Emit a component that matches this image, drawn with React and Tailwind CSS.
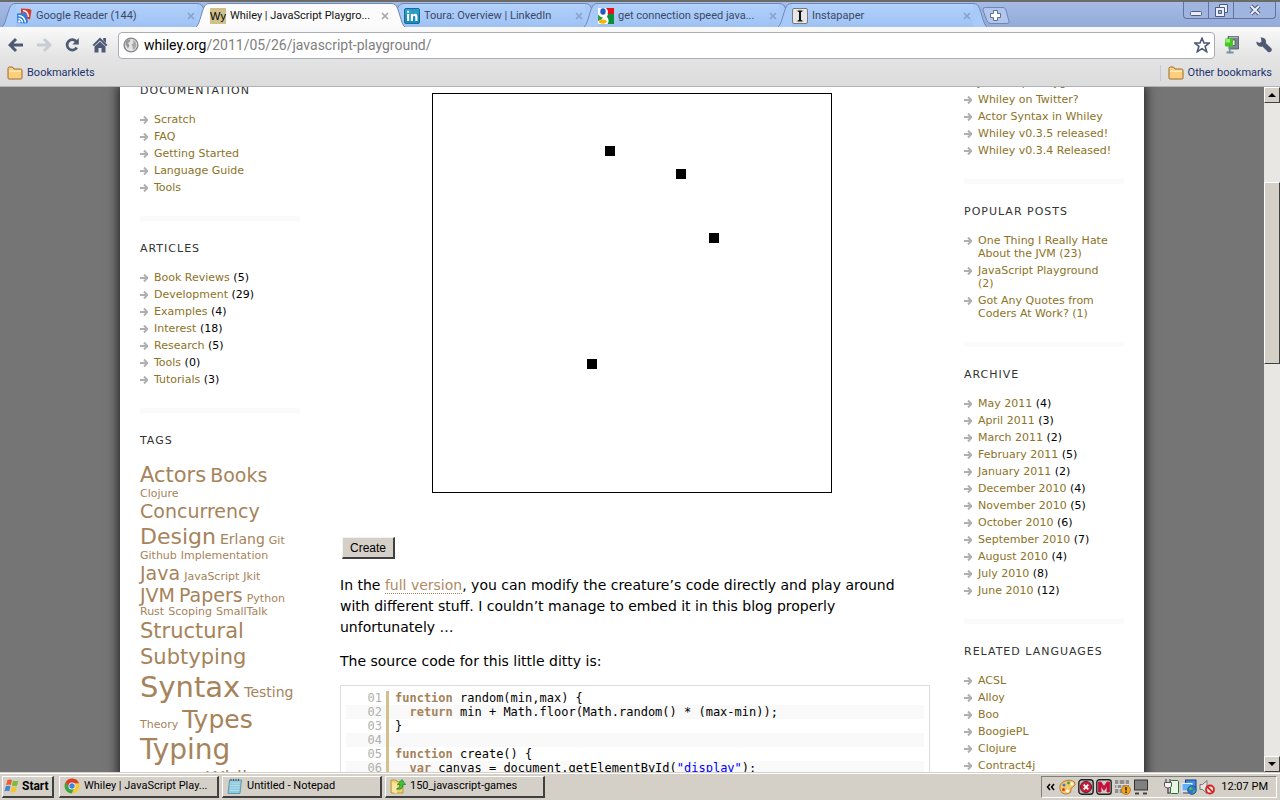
import React from "react";

const UI = "font-['Roboto','Liberation_Sans',sans-serif]";
const BODY = "font-['DejaVu_Sans',sans-serif]";

/* ---------- icons ---------- */

const Svg = ({ w = 16, h = 16, children, className = "" }) => (
  <svg width={w} height={h} viewBox={`0 0 ${w} ${h}`} className={`shrink-0 ${className}`} aria-hidden="true">
    {children}
  </svg>
);

const ReaderIcon = () => (
  <Svg>
    <path d="M5 0.5 14 1 15.5 2.5 14 11.5 5 9Z" fill="#d93a2b" />
    <path d="M7 2.500Q12 3 12.500 9M7 5.500Q9.500 6 10 9" stroke="#fff" strokeWidth="1.300" fill="none" />
    <path d="M1 5.500 10 5 12 14 10.500 15.500 1.500 15Z" fill="#2a7de0" />
    <path d="M2.500 7.500Q8.500 8 9.500 14.500M2.500 10.500Q6 11 6.500 14.500" stroke="#fff" strokeWidth="1.500" fill="none" />
    <circle cx="3.300" cy="13.500" r="1.200" fill="#fff" />
  </Svg>
);

const WhileyIcon = () => (
  <span className="flex size-4 shrink-0 items-center justify-center bg-[#cfc08c] font-['Liberation_Sans',sans-serif] text-[11px] leading-4 text-black">
    Wy
  </span>
);

const LinkedInIcon = () => (
  <Svg>
    <rect x="0.500" y="0.500" width="15" height="15" rx="1.500" fill="#1b8dbb" stroke="#0f6f99" />
    <rect x="1" y="1" width="14" height="6" fill="#3ba5cf" opacity=".6" />
    <path d="M3 6h2.200v7H3zM3 2.800h2.200v2H3zM6.800 6H9v1Q9.800 5.800 11.200 5.800 13.500 5.800 13.500 8.800V13h-2.200V9.300Q11.300 7.800 10.200 7.800 9 7.800 9 9.300V13H6.800Z" fill="#fff" />
  </Svg>
);

const GoogleIcon = () => (
  <Svg>
    <rect width="16" height="16" fill="#fff" />
    <path d="M8 0h8v6H9.500Q11 3 8 0Z" fill="#e8121a" />
    <path d="M10 6h6v10H9.500Q12 12.500 9 9Z" fill="#0a8f3c" />
    <path d="M0 6.500Q2 9 5 9.500L3.500 11.500 0 13Z" fill="#2e9c45" />
    <ellipse cx="5" cy="3.500" rx="2.700" ry="3.300" fill="#2458c4" />
    <ellipse cx="4.800" cy="13.600" rx="3.800" ry="2.100" fill="#f5b400" />
  </Svg>
);

const InstapaperIcon = () => (
  <Svg>
    <rect x="0.500" y="0.500" width="15" height="15" rx="1.500" fill="#e6e6e6" stroke="#77797d" />
    <path d="M5.500 2.500h5v1L9 4v8l1.500.5v1h-5v-1L7 12V4L5.500 3.500Z" fill="#111" />
  </Svg>
);

const CloseX = ({ light }) => (
  <Svg w={8} h={8}>
    <path d="M1 1 7 7M7 1 1 7" stroke={light ? "#a3a3a3" : "#86a1c8"} strokeWidth="1.500" />
  </Svg>
);

const BackIcon = ({ color }) => (
  <Svg>
    <path d="M8 2 2 8l6 6M2.500 8H15" stroke={color} strokeWidth="3" fill="none" />
  </Svg>
);
const ForwardIcon = ({ color }) => (
  <Svg>
    <path d="M8 2 14 8 8 14M13.500 8H1" stroke={color} strokeWidth="3" fill="none" />
  </Svg>
);
const ReloadIcon = () => (
  <Svg>
    <path d="M12.400 4.700A5.200 5.200 0 1 0 12.800 10.500" stroke="#4e5a73" strokeWidth="2.700" fill="none" />
    <path d="M14.800 1v6.500H8.300Z" fill="#4e5a73" />
  </Svg>
);
const HomeIcon = () => (
  <Svg>
    <path d="M8 0.500 15.500 8 14 9.200 8 3.500 2 9.200.500 8ZM11.200 1H14v5l-2.800-2.800Z" fill="#4e5a73" />
    <path d="M8 4.500 13.500 9.500V15.500H9.500V11h-3v4.500H2.500V9.500Z" fill="#4e5a73" />
  </Svg>
);
const GlobeIcon = () => (
  <Svg>
    <circle cx="8" cy="8" r="6.900" fill="#e4e4e4" stroke="#858585" strokeWidth="1.400" />
    <path d="M3 4Q5 2 7.500 2.200L7 4.500 5 6 6.500 8.500 5 11.500 3.500 9 2.300 7Z" fill="#999" />
    <path d="M9.500 3 12.500 4.500 13.500 8 12 12 9.800 12.500 9.500 9.500 8.500 7.500 10.500 6Z" fill="#aaa" />
  </Svg>
);
const StarIcon = () => (
  <Svg>
    <path d="M8 1.300 10 6h5.200l-4.100 3.300 1.600 5.400L8 11.600l-4.700 3.100 1.600-5.400L.8 6H6Z" fill="#fff" stroke="#4e5a73" strokeWidth="1.600" />
  </Svg>
);
const ClampIcon = () => (
  <Svg h={20}>
    <path d="M4 1.500H14.500V14H5V10.500H11V5H4Z" fill="#7b868c" stroke="#4b555b" strokeWidth=".8" />
    <path d="M5 2.300H14" stroke="#b9c2c6" />
    <rect x="1" y="3.500" width="8" height="8" rx="1" fill="#3fca1c" />
    <path d="M1.500 4H6V7.500H1.500Z" fill="#95f26e" />
    <path d="M5.700 12V18.500M2.500 17.500H9.500" stroke="#7790a0" strokeWidth="1.800" />
  </Svg>
);
const WrenchIcon = () => (
  <Svg>
    <path d="M0.500 4.500 3.500 6 5.500 4.500 5 1.500 4.500.500Q8.500 0 9.800 3.300 10.200 4.800 9.800 6L15.500 11.500Q16.300 13.300 15 14.500 13.700 15.800 12 15L6.500 9.500Q3 10.500 1 7.500.200 6 .5 4.500Z" fill="#4e5a73" />
  </Svg>
);
const FolderIcon = () => (
  <Svg w={16} h={14}>
    <path d="M1 12V2.500Q1 1 2.500 1H5.500L7 3H13.500Q15 3 15 4.500V12Q15 13 14 13H2Q1 13 1 12Z" fill="#fbcf7c" stroke="#9b6b34" />
    <path d="M2 4.500H14V6H2Z" fill="#ffe8b5" />
  </Svg>
);

const ArrowBullet = () => (
  <Svg w={8} h={13}>
    <path d="M0 7H7M4 3.500 7.300 7 4 10.500" stroke="#b0b0b0" strokeWidth="1.900" fill="none" />
  </Svg>
);

/* ---------- browser chrome ---------- */

const tabs = [
  { title: "Google Reader (144)", icon: <ReaderIcon /> },
  { title: "Whiley | JavaScript Playgro...", icon: <WhileyIcon />, active: true },
  { title: "Toura: Overview | LinkedIn", icon: <LinkedInIcon /> },
  { title: "get connection speed java...", icon: <GoogleIcon /> },
  { title: "Instapaper", icon: <InstapaperIcon /> },
];

function Tab({ title, icon, active }) {
  const fill = active ? "#fbfbfb" : "#a8caf8";
  return (
    <div className={`flex h-[24px] w-[209px] shrink -mr-[15px] ${active ? "z-10" : ""}`}>
      <Svg w={14} h={24}>
        <path d="M0 24C4 22 6 4 10 1.500Q11 .5 14 .5V24Z" fill={fill} />
        <path d="M0 24C4 22 6 4 10 1.500Q11 .5 14 .5" fill="none" stroke="#6f87b3" />
      </Svg>
      <div
        className={`flex min-w-0 flex-1 items-center border-t border-[#6f87b3] ${
          active ? "bg-[#fbfbfb] text-[#111]" : "bg-linear-to-b from-[#b2d1fb] to-[#9fc2f4] text-[#3a4a66]"
        }`}
      >
        {icon}
        <a href="#tab" className="ml-1 min-w-0 flex-1 truncate text-[11px] leading-4">
          {title}
        </a>
        <button aria-label={`Close ${title}`} className="mr-[2px]">
          <CloseX light={active} />
        </button>
      </div>
      <Svg w={14} h={24}>
        <path d="M14 24C10 22 8 4 4 1.500Q3 .5 0 .5V24Z" fill={fill} />
        <path d="M14 24C10 22 8 4 4 1.500Q3 .5 0 .5" fill="none" stroke="#6f87b3" />
      </Svg>
    </div>
  );
}

function TabStrip() {
  return (
    <div className="flex h-[27px] items-end border-t-2 border-[#6b6b66] bg-linear-to-b from-[#a6bce6] to-[#93a9d8] pl-[2px] pr-1">
      <div className="flex min-w-0 items-end">
        {tabs.map((t) => (
          <Tab key={t.title} {...t} />
        ))}
      </div>
      <button aria-label="New tab" className="ml-[10px] mb-[3px]">
        <Svg w={28} h={17}>
          <path d="M3 .5H21Q23 .5 24 3L27 14.500Q27 16.500 25 16.500H9Q6 16.500 5 14L1 3Q.500 .5 3 .5Z" fill="#b0c6ec" stroke="#6f87b3" />
          <path d="M11.500 3.500h4v3h3v4h-3v3h-4v-3h-3v-4h3Z" fill="#fff" stroke="#5b7099" />
        </Svg>
      </button>
      <div className="ml-auto flex h-[17px] self-start overflow-hidden rounded-b-[4px] border border-t-0 border-[#5f759f] bg-[#9fb4df]">
        <button aria-label="Minimize" className="flex w-[25px] items-center justify-center border-r border-[#5f759f]">
          <Svg w={12} h={14}>
            <rect x=".5" y="8.500" width="11" height="4" rx="1" fill="#e8eefb" stroke="#4c5c80" />
          </Svg>
        </button>
        <button aria-label="Restore" className="flex w-[25px] items-center justify-center border-r border-[#5f759f]">
          <Svg w={13} h={14}>
            <path d="M4.500 1.500h8v8h-8Z" fill="#e8eefb" stroke="#4c5c80" />
            <path d="M.5 4.500h9v9h-9Z" fill="#e8eefb" stroke="#4c5c80" />
            <path d="M3.500 7.500h3v3h-3Z" fill="#9fb4df" stroke="#4c5c80" />
          </Svg>
        </button>
        <button aria-label="Close" className="flex w-[41px] items-center justify-center">
          <Svg w={12} h={12}>
            <path d="M2 2 10 10M10 2 2 10" stroke="#4c5c80" strokeWidth="4" />
            <path d="M2 2 10 10M10 2 2 10" stroke="#e8eefb" strokeWidth="2" />
          </Svg>
        </button>
      </div>
    </div>
  );
}

function Toolbar() {
  return (
    <div className="flex flex-col border-b border-[#b0b3ba] bg-linear-to-b from-[#fafafa] via-[#e4e4e4] to-[#dcdcdc]">
      <div className="flex h-8 items-center pl-2 pr-2 pt-1">
        <div className="flex gap-3">
          <button aria-label="Back"><BackIcon color="#4e5a73" /></button>
          <button aria-label="Forward"><ForwardIcon color="#c9ccd2" /></button>
          <button aria-label="Reload"><ReloadIcon /></button>
          <button aria-label="Home"><HomeIcon /></button>
        </div>
        <div className="ml-[10px] flex h-[27px] flex-1 items-center rounded-[4px] border border-[#a9adb5] bg-white pl-1 pr-1">
          <GlobeIcon />
          <label className="relative ml-[5px] flex h-5 flex-1 items-center text-[14px] leading-5">
            <span aria-hidden="true" className="pointer-events-none whitespace-pre text-[#808080]">
              <span className="text-black">whiley.org</span>/2011/05/26/javascript-playground/
            </span>
            <input
              aria-label="Address"
              defaultValue="whiley.org/2011/05/26/javascript-playground/"
              className="absolute inset-0 w-full bg-transparent text-transparent outline-none"
            />
          </label>
          <button aria-label="Bookmark this page"><StarIcon /></button>
        </div>
        <button aria-label="Extension" className="ml-[9px]"><ClampIcon /></button>
        <button aria-label="Settings" className="ml-4"><WrenchIcon /></button>
      </div>
      <div className="flex h-[27px] items-center pl-[7px] pr-2 text-[11px] leading-4 text-[#1c3370]">
        <a href="#bookmarklets" className="flex items-center gap-1"><FolderIcon />Bookmarklets</a>
        <a href="#other" className="ml-auto flex items-center gap-1 border-l border-[#c3cad6] pl-[7px]"><FolderIcon />Other bookmarks</a>
      </div>
    </div>
  );
}

/* ---------- sidebars ---------- */

function Heading({ children }) {
  return <h3 className="mb-4 text-[11px] leading-[13px] tracking-[1px] text-[#333]">{children}</h3>;
}

function Section({ title, items }) {
  return (
    <section>
      {title && <Heading>{title}</Heading>}
      <ul className="mb-[18px] pr-2">
        {items.map(([name, count]) => (
          <li key={name} className="flex gap-[6px] pb-1">
            <ArrowBullet />
            <span>
              <a href="#item" className="text-[#8c7326]">{name}</a>
              {count !== undefined && ` (${count})`}
            </span>
          </li>
        ))}
      </ul>
      <div className="mb-[21px] h-[5px] bg-[#fafafa]" />
    </section>
  );
}

const documentation = [["Scratch"], ["FAQ"], ["Getting Started"], ["Language Guide"], ["Tools"]];
const articles = [
  ["Book Reviews", 5], ["Development", 29], ["Examples", 4], ["Interest", 18],
  ["Research", 5], ["Tools", 0], ["Tutorials", 3],
];
const recent = [
  ["JavaScript Playground"], ["Whiley on Twitter?"], ["Actor Syntax in Whiley"],
  ["Whiley v0.3.5 released!"], ["Whiley v0.3.4 Released!"],
];
const popular = [
  ["One Thing I Really Hate About the JVM (23)"], ["JavaScript Playground (2)"],
  ["Got Any Quotes from Coders At Work? (1)"],
];
const archive = [
  ["May 2011", 4], ["April 2011", 3], ["March 2011", 2], ["February 2011", 5], ["January 2011", 2],
  ["December 2010", 4], ["November 2010", 5], ["October 2010", 6], ["September 2010", 7],
  ["August 2010", 4], ["July 2010", 8], ["June 2010", 12],
];
const languages = [["ACSL"], ["Alloy"], ["Boo"], ["BoogiePL"], ["Clojure"], ["Contract4j"]];

const S = "text-[11px]";
const M = "text-[14px]";
const L = "text-[19px]";
const XL = "text-[21px]";
const tagRows = [
  ["h-[24px] leading-[24px]", [["Actors", XL], ["Books", L]]],
  ["h-[13px] leading-[13px]", [["Clojure", S]]],
  ["h-[23px] leading-[23px]", [["Concurrency", L]]],
  ["h-[27px] leading-[27px]", [["Design", "text-[22px]"], ["Erlang", M], ["Git", S]]],
  ["h-[12px] leading-[12px]", [["Github", S], ["Implementation", S]]],
  ["h-[23px] leading-[23px]", [["Java", L], ["JavaScript", S], ["Jkit", S]]],
  ["h-[21px] leading-[21px]", [["JVM", L], ["Papers", L], ["Python", S]]],
  ["h-[12px] leading-[12px]", [["Rust", S], ["Scoping", S], ["SmallTalk", S]]],
  ["h-[27px] leading-[27px]", [["Structural", XL]]],
  ["h-[24px] leading-[24px]", [["Subtyping", XL]]],
  ["h-[36px] leading-[36px]", [["Syntax", "text-[29px]"], ["Testing", M]]],
  ["h-[29px] leading-[29px]", [["Theory", S], ["Types", "text-[25px]"]]],
  ["h-[32px] leading-[32px]", [["Typing", "text-[28px]"]]],
  ["h-[24px] leading-[24px]", [["Verification", S], ["Whiley", L]]],
];

function TagCloud() {
  return (
    <section>
      <Heading>TAGS</Heading>
      {tagRows.map(([row, tags]) => (
        <div key={tags[0][0]} className={`flex items-baseline gap-1 whitespace-nowrap text-[#a6835a] ${row}`}>
          {tags.map(([t, size]) => (
            <a key={t} href="#tag" className={size}>{t}</a>
          ))}
        </div>
      ))}
    </section>
  );
}

/* ---------- article ---------- */

const K = ({ children }) => <b className="text-[#a6835a]">{children}</b>;
const Str = ({ children }) => <span className="text-[#0000ff]">{children}</span>;
const code = [
  <><K>function</K>{" random(min,max) {"}</>,
  <>{"  "}<K>return</K>{" min + Math.floor(Math.random() * (max-min));"}</>,
  "}",
  " ",
  <><K>function</K>{" create() {"}</>,
  <>{"  "}<K>var</K>{" canvas = document.getElementById("}<Str>"display"</Str>{");"}</>,
];

function Article() {
  return (
    <main className="min-w-0 flex-1 pt-[6px] text-[14px] leading-[21px] text-black">
      <div className="flex justify-center pr-[6px]">
        <svg width="400" height="400" viewBox="0 0 400 400" role="img" aria-label="Creatures">
          <rect x=".5" y=".5" width="399" height="399" fill="#fff" stroke="#000" />
          <path d="M173 53h10v10h-10ZM244 76h10v10h-10ZM277 140h10v10h-10ZM155 266h10v10h-10Z" fill="#000" />
        </svg>
      </div>
      <button className="mb-4 ml-[2px] mt-11 block h-[22px] border border-b-2 border-r-2 border-b-[#404040] border-l-[#f4f2ee] border-r-[#404040] border-t-[#f4f2ee] bg-[#d4d0c8] px-[7px] font-['Liberation_Sans',sans-serif] text-[12px] leading-4">
        Create
      </button>
      <p className="mb-[13px] pr-6">
        In the <a href="#full" className="border-b border-dotted border-[#a6835a] text-[#b08a62]">full version</a>, you can modify the
        creature’s code directly and play around with different stuff. I couldn’t manage to embed it in this blog properly
        unfortunately …
      </p>
      <p className="mb-[13px]">The source code for this little ditty is:</p>
      <pre className="border border-[#ddd] p-[5px] font-['DejaVu_Sans_Mono',monospace] text-[12px] leading-[14px]">
        {code.map((line, i) => (
          <div key={i} className={`flex ${i % 2 ? "bg-[#f9f9f9]" : ""}`}>
            <span className="w-10 shrink-0 pr-1 text-right text-[#afafaf]">{`0${i + 1}`}</span>
            <code className="flex-1 border-l-[3px] border-[#d4c08c] pl-[6px] font-['DejaVu_Sans_Mono',monospace]">{line}</code>
          </div>
        ))}
      </pre>
    </main>
  );
}

function Scrollbar() {
  const raised = "border border-b-[#404040] border-l-white border-r-[#404040] border-t-white bg-[#d4d0c8]";
  return (
    <div className="flex w-4 shrink-0 flex-col bg-[#e9e7e3]">
      <button aria-label="Scroll up" className={`flex h-4 shrink-0 items-center justify-center ${raised}`}>
        <Svg w={8} h={4}><path d="M4 0 8 4H0Z" fill="#000" /></Svg>
      </button>
      <div className="flex-[79]" />
      <div className={`flex-[181] ${raised}`} />
      <div className="flex-[393]" />
      <button aria-label="Scroll down" className={`flex h-4 shrink-0 items-center justify-center ${raised}`}>
        <Svg w={8} h={4}><path d="M4 4 8 0H0Z" fill="#000" /></Svg>
      </button>
    </div>
  );
}

/* ---------- taskbar ---------- */

const WindowsLogo = () => (
  <Svg>
    <path d="M3.500 2Q6 .8 8 2L6.800 7Q4.500 6 2 7.200Z" fill="#ee5a2a" />
    <path d="M9 2.500Q11.500 3.600 14.500 2.500L13 7.700Q10.500 8.600 7.800 7.500Z" fill="#7dbb3a" />
    <path d="M1.800 8.300Q4.200 7.200 6.500 8.200L5.200 13.200Q3 12.200.4 13.400Z" fill="#3f86d8" />
    <path d="M7.600 8.700Q10 9.800 12.800 8.800L11.400 14Q9 15 6.300 13.800Z" fill="#f7c331" />
  </Svg>
);
const ChromeIcon = () => (
  <Svg>
    <circle cx="8" cy="8" r="7.500" fill="#f6c92e" />
    <path d="M1.500 4.300A7.500 7.500 0 0 1 15 5.300H8L4.800 10Z" fill="#db3d2e" />
    <path d="M1.500 4.300A7.500 7.500 0 0 0 7.500 15.500L10.800 9.500 5 9.500Z" fill="#3aa648" />
    <circle cx="8" cy="8" r="3.500" fill="#fff" />
    <circle cx="8" cy="8" r="2.700" fill="#3f83e0" />
  </Svg>
);
const NotepadIcon = () => (
  <Svg>
    <path d="M2.500 2H14.500L13 15.500H1Z" fill="#8ecbe0" stroke="#4b8da6" strokeWidth=".8" />
    <path d="M4 5H13M3.700 7.500H12.700M3.500 10H12.500M3 12.500H12" stroke="#b5deea" />
    <path d="M4 .8V3M6.500 .8V3M9 .8V3M11.500 .8V3" stroke="#555" />
  </Svg>
);
const GamesFolderIcon = () => (
  <Svg>
    <path d="M1 2H6L7 3.500H13V15H1Z" fill="#f1cf68" stroke="#b58a2c" strokeWidth=".8" />
    <path d="M2 4 7 5.500V15.500L2 14Z" fill="#fbe7a0" />
    <path d="M6.500 11Q10 10.500 10 6.500H7.500L12 1.500 15.500 6.500H13Q13 12.500 6.500 11Z" fill="#3fc23c" stroke="#1d7d25" strokeWidth=".7" />
  </Svg>
);

const raisedTask =
  "border border-t-white border-l-white border-b-2 border-r-2 border-b-[#404040] border-r-[#404040] bg-[#d4d0c8]";

function TaskButton({ icon, children }) {
  return (
    <button className={`flex h-[22px] w-[160px] items-center gap-1 pl-1 pr-2 text-left text-[11px] leading-4 ${raisedTask}`}>
      {icon}
      <span className="truncate">{children}</span>
    </button>
  );
}

function TrayIcons() {
  return (
    <>
      <Svg w={17}>
        <path d="M1 10Q0 4 6 2 12 0 15.500 3 17.500 6 14 8 11 9 12 11 13 14 8 15 2 15.500 1 10Z" fill="#f6c964" stroke="#a8662a" strokeWidth=".8" />
        <circle cx="5" cy="6" r="1.500" fill="#3a78d8" /><circle cx="9.500" cy="4" r="1.400" fill="#3aa34a" />
        <circle cx="13" cy="5" r="1.400" fill="#fff" /><circle cx="4.500" cy="10.500" r="1.500" fill="#d93a2b" />
        <circle cx="8.500" cy="12" r="1.500" fill="#fff" />
      </Svg>
      <Svg>
        <rect x=".8" y=".8" width="14.400" height="14.400" rx="3" fill="#b8b8b8" stroke="#222" strokeWidth="1.400" />
        <circle cx="8" cy="8" r="5.500" fill="#c5203c" stroke="#7c1024" />
        <path d="M5.700 5.700 10.300 10.300M10.300 5.700 5.700 10.300" stroke="#fff" strokeWidth="1.800" />
      </Svg>
      <Svg>
        <rect x=".8" y=".8" width="14.400" height="14.400" rx="2.500" fill="#d0cdc8" stroke="#222" strokeWidth="1.400" />
        <path d="M2.500 13V3H5L8 7.500 11 3H13.500V13H11V7L8 11.500 5 7V13Z" fill="#c4103a" stroke="#c4103a" strokeWidth=".8" />
      </Svg>
      <Svg w={17}>
        <rect x="1" y="1" width="14" height="13" fill="#8f8f8f" />
        <path d="M1 5.500H15M1 9.500H15M5 1V5.500M11 1V5.500M8 5.500V9.500M3 5.500V9.500M5 9.500V14M13 5.500V9.500" stroke="#dedede" strokeWidth="1.200" />
        <circle cx="12" cy="11" r="4.500" fill="#f0a51c" stroke="#b06c10" strokeWidth=".7" />
        <path d="M12 8V11.500M12 12.500V14" stroke="#3b2500" strokeWidth="1.600" />
      </Svg>
      <Svg>
        <rect x="1.500" y="1" width="13" height="10" fill="#808080" stroke="#333" />
        <path d="M2 14.500H6M10 14.500H14" stroke="#444" strokeWidth="2" />
      </Svg>
      <Svg className="ml-3">
        <rect x="7.500" y="1.500" width="8" height="13" rx="1" fill="#e9f6e2" stroke="#2f6a45" />
        <path d="M3 0V4M7 0V4" stroke="#555" strokeWidth="1.300" />
        <path d="M1.500 3.500H8.500V7Q8 9 5 9 2 9 1.500 7Z" fill="#f4f4f4" stroke="#555" />
        <path d="M5 9V14H7.500" fill="none" stroke="#555" strokeWidth="1.500" />
      </Svg>
      <Svg>
        <rect x="4.500" y="1" width="10.500" height="8" fill="#3b8fe0" stroke="#1b3d78" />
        <rect x="1" y="4.500" width="10" height="7.500" fill="#62b0f4" stroke="#e8eef8" />
        <path d="M2 14H8" stroke="#777" strokeWidth="1.500" />
        <circle cx="11" cy="11" r="4.400" fill="#2f77cf" stroke="#184a8c" strokeWidth=".7" />
        <path d="M9 8Q12 8 11.500 10.500 9 11.500 8 10ZM12 12 14.500 11Q14 14 11.500 14.500Z" fill="#59b84b" />
      </Svg>
      <Svg>
        <path d="M1 5.500H3.500L8 1.500V14.500L3.500 10.500H1Z" fill="#e4e4e4" stroke="#777" />
        <circle cx="11" cy="10.500" r="4" fill="#fff" fillOpacity=".6" stroke="#d62222" strokeWidth="1.800" />
        <path d="M8.200 7.700 13.800 13.300" stroke="#d62222" strokeWidth="1.800" />
      </Svg>
    </>
  );
}

function Taskbar() {
  return (
    <footer className="flex h-7 shrink-0 items-center border-t border-[#d4d0c8] bg-[#d4d0c8] text-black shadow-[inset_0_1px_0_#fff]">
      <button className={`ml-[2px] flex h-[22px] w-[52px] items-center gap-[2px] pl-[1px] text-[12px] font-bold leading-4 ${raisedTask}`}>
        <WindowsLogo />
        Start
      </button>
      <div className="ml-[5px] flex gap-[3px]">
        <TaskButton icon={<ChromeIcon />}>Whiley | JavaScript Play...</TaskButton>
        <TaskButton icon={<NotepadIcon />}>Untitled - Notepad</TaskButton>
        <TaskButton icon={<GamesFolderIcon />}>150_javascript-games</TaskButton>
      </div>
      <div className="ml-auto mr-[3px] flex h-[22px] items-center gap-[2px] border border-b-white border-l-[#808080] border-r-white border-t-[#808080] pl-1 pr-2 text-[11px] leading-4">
        <button aria-label="Show hidden icons" className="mr-[2px]">
          <Svg w={9} h={8}><path d="M4 1 1.500 4 4 7M8 1 5.500 4 8 7" stroke="#000" strokeWidth="1.500" fill="none" /></Svg>
        </button>
        <TrayIcons />
        <span className="ml-1">12:07 PM</span>
      </div>
    </footer>
  );
}

export default function App() {
  return (
    <div className={`flex h-screen flex-col overflow-hidden ${UI}`}>
      <header className="shrink-0">
        <TabStrip />
        <Toolbar />
      </header>
      <div className="flex min-h-0 flex-1">
        <div className={`flex min-w-0 flex-1 items-start justify-center overflow-hidden bg-[#757575] ${BODY}`}>
          <div className="flex min-h-full w-full max-w-[1024px] bg-white px-5 text-[11px] leading-[13px] shadow-[0_0_10px_2px_#222]">
            <aside className="-mt-[3px] w-40 shrink-0">
              <Section title="DOCUMENTATION" items={documentation} />
              <Section title="ARTICLES" items={articles} />
              <TagCloud />
            </aside>
            <div className="flex min-w-0 flex-1 pl-10 pr-[34px]">
              <Article />
            </div>
            <aside className="-mt-[11px] w-40 shrink-0">
              <Section items={recent} />
              <Section title="POPULAR POSTS" items={popular} />
              <Section title="ARCHIVE" items={archive} />
              <Section title="RELATED LANGUAGES" items={languages} />
            </aside>
          </div>
        </div>
        <Scrollbar />
      </div>
      <Taskbar />
    </div>
  );
}
